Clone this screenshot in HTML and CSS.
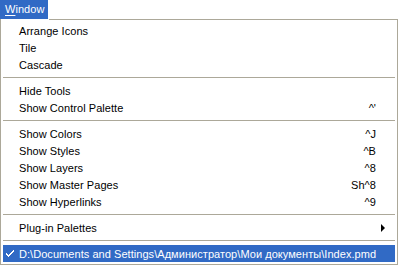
FILE: index.html
```html
<!DOCTYPE html>
<html>
<head>
<meta charset="utf-8">
<link rel="stylesheet" href="styles.css">
</head>
<body>
<div class="menubar"><span class="title"><u>W</u>indow</span></div>
<div class="menu">
  <div class="item"><span class="label">Arrange Icons</span></div>
  <div class="item"><span class="label">Tile</span></div>
  <div class="item"><span class="label">Cascade</span></div>
  <div class="sep"></div>
  <div class="item"><span class="label">Hide Tools</span></div>
  <div class="item"><span class="label">Show Control Palette</span><span class="key">^'</span></div>
  <div class="sep"></div>
  <div class="item"><span class="label">Show Colors</span><span class="key">^J</span></div>
  <div class="item"><span class="label">Show Styles</span><span class="key">^B</span></div>
  <div class="item"><span class="label">Show Layers</span><span class="key">^8</span></div>
  <div class="item"><span class="label">Show Master Pages</span><span class="key">Sh^8</span></div>
  <div class="item"><span class="label">Show Hyperlinks</span><span class="key">^9</span></div>
  <div class="sep"></div>
  <div class="item"><span class="label">Plug-in Palettes</span><span class="arrow"></span></div>
  <div class="sep"></div>
  <div class="item selected">
    <svg class="check" width="8" height="7" viewBox="0 0 8 7"><path d="M0 3h1v1h1v1h1V4h1V3h1V2h1V1h1V0h1v2H7v1H6v1H5v1H4v1H3v1H2V6H1V5H0z" fill="#fff"/></svg>
    <span class="label">D:\Documents and Settings\Администратор\Мои документы\Index.pmd</span>
  </div>
</div>
</body>
</html>
```
FILE: styles.css
```css
html, body {
  margin: 0;
  padding: 0;
  background: #fff;
}
body {
  width: 398px;
  height: 265px;
  overflow: hidden;
  font-family: "Liberation Sans", "DejaVu Sans", sans-serif;
  font-size: 11px;
  letter-spacing: 0.05px;
  color: #000;
}
.menubar {
  height: 19px;
  display: flex;
}
.title {
  width: 48px;
  height: 19px;
  box-sizing: border-box;
  padding-left: 5px;
  line-height: 19px;
  background: #316ac5;
  color: #fff;
}
.title u {
  text-decoration-thickness: 1px;
  text-underline-offset: 2px;
}
.menu {
  position: relative;
  height: 246px;
  box-sizing: border-box;
  border: 1px solid #aca899;
  padding: 2px;
  display: flex;
  flex-direction: column;
}
.menu::before {
  content: "";
  position: absolute;
  left: 0;
  top: -1px;
  width: 48px;
  height: 1px;
  background: #fff;
}
.item {
  height: 17px;
  display: flex;
  align-items: center;
  padding-left: 16px;
  padding-right: 19px;
  position: relative;
}
.label {
  flex: 1;
  white-space: nowrap;
}
.key {
  white-space: nowrap;
}
.arrow {
  width: 0;
  height: 0;
  border-top: 4px solid transparent;
  border-bottom: 4px solid transparent;
  border-left: 4px solid #000;
  margin-right: -9px;
}
.sep {
  height: 9px;
  display: flex;
  align-items: center;
}
.sep::after {
  content: "";
  flex: 1;
  height: 1px;
  background: #aca899;
}
.selected {
  background: #316ac5;
  color: #fff;
}
.check {
  position: absolute;
  left: 3px;
  top: 5px;
}
```
